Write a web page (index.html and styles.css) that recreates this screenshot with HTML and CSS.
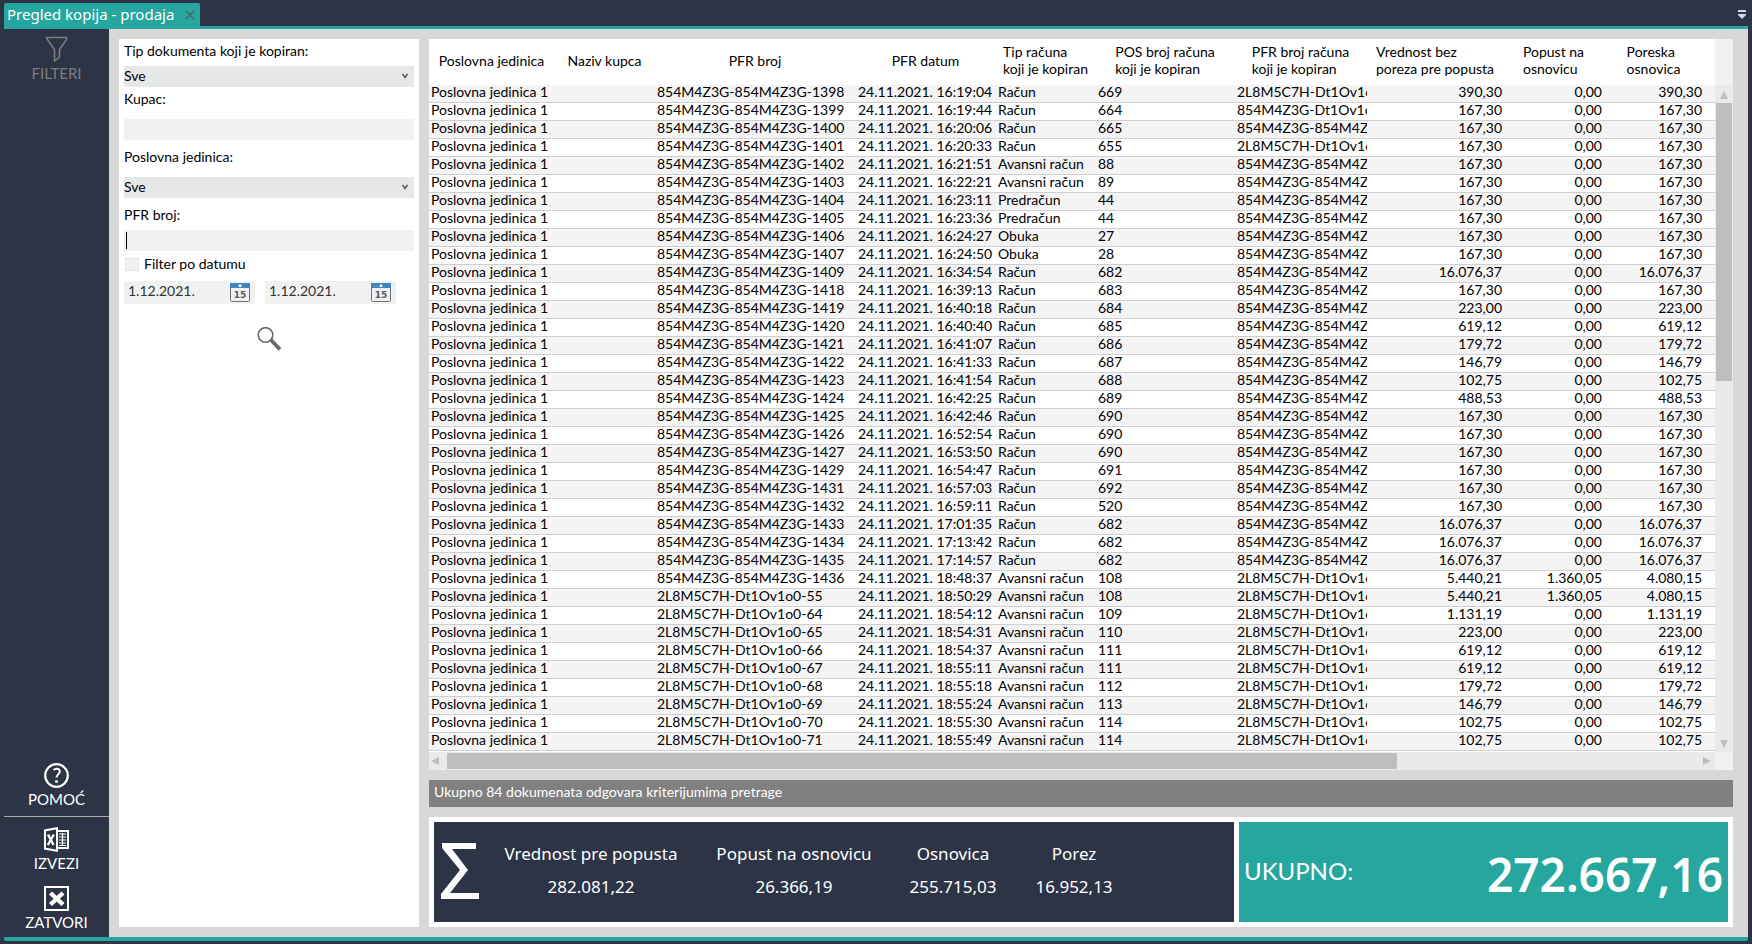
FILE: index.html
```html
<!DOCTYPE html>
<html lang="sr-Latn">
<head>
<meta charset="utf-8">
<title>Pregled kopija - prodaja</title>
<link rel="stylesheet" href="styles.css">
</head>
<body>
<header class="tabbar">
  <div class="tab">
    <span>Pregled kopija - prodaja</span>
    <button class="tab-close" aria-label="Zatvori karticu"><svg width="10" height="10" viewBox="0 0 10 10"><path d="M1 1l8 8M9 1l-8 8" stroke="#4d6464" stroke-width="1.5"/></svg></button>
  </div>
  <button class="tab-menu" aria-label="Lista kartica"><svg width="8" height="9" viewBox="0 0 8 9"><path d="M0 0h8v2H0zM0 4h8v1L4 9 0 5z" fill="#d3d8e6"/></svg></button>
</header>
<div class="workspace">
  <nav class="sidebar">
    <button class="side-btn side-btn-off">
      <svg width="25" height="26" viewBox="0 0 25 26"><path d="M2.500 1.500h20v2l-7 10v7.500l-5 4v-11.500l-7-10z" fill="none" stroke="#7d7d7b" stroke-width="1.600"/></svg>
      <span>FILTERI</span>
    </button>
    <div class="side-bottom">
      <button class="side-btn">
        <svg width="25" height="25" viewBox="0 0 25 25" fill="none" stroke="#fff"><circle cx="12.500" cy="12.500" r="11.300" stroke-width="2.200"/><path d="M9.500 7.200c1-1.100 2-1.400 3.200-1.400 1.900 0 3.100 1.100 3.100 2.800 0 2.700-3.300 2.900-3.300 5.900" stroke-width="2"/><path d="M11.200 17.200h2.600v2.600h-2.600z" fill="#fff" stroke="none"/></svg>
        <span>POMOĆ</span>
      </button>
      <hr class="side-line">
      <button class="side-btn">
        <svg width="25" height="25" viewBox="0 0 25 25"><path d="M0 2.500L14 0v25L0 22.500z" fill="#fff"/><path d="M14 4h10v17H14" fill="none" stroke="#fff" stroke-width="2"/><path d="M2 4.300l10-1.700v19.800L2 20.700z" fill="#2d3446"/><path d="M4 7.500l5.500 10.500M9.800 7.500L3.800 18" stroke="#fff" stroke-width="2.400"/><path d="M15 7h7M15 10h7M15 13h7M15 16h7M15 18.500h7M18.500 6v13" stroke="#fff" stroke-width="1.200"/></svg>
        <span>IZVEZI</span>
      </button>
      <button class="side-btn side-btn-last">
        <svg width="25" height="25" viewBox="0 0 25 25" fill="none" stroke="#fff"><path d="M1 1h23v23H1z" stroke-width="2"/><path d="M6.500 7l12.500 11.500M19 7L6.500 18.500" stroke-width="4.400"/></svg>
        <span>ZATVORI</span>
      </button>
    </div>
  </nav>
  <main class="content">
    <form class="filters">
      <label for="tip">Tip dokumenta koji je kopiran:</label>
      <div class="select-wrap"><select id="tip"><option>Sve</option></select><svg class="chevron" width="6" height="6" viewBox="0 0 6 6"><path d="M.5 1L3 4.500 5.500 1" fill="none" stroke="#555" stroke-width="1.500"/></svg></div>
      <label for="kupac">Kupac:</label>
      <input class="field field-low" id="kupac" type="text">
      <label class="label-low" for="pj">Poslovna jedinica:</label>
      <div class="select-wrap field-low"><select id="pj"><option>Sve</option></select><svg class="chevron" width="6" height="6" viewBox="0 0 6 6"><path d="M.5 1L3 4.500 5.500 1" fill="none" stroke="#555" stroke-width="1.500"/></svg></div>
      <label class="label-low" for="pfr">PFR broj:</label>
      <div class="caret-wrap"><input class="field" id="pfr" type="text"><span class="caret"></span></div>
      <div class="check-row"><input type="checkbox" id="pd"><label for="pd">Filter po datumu</label></div>
      <div class="dates">
        <div class="date"><input type="text" aria-label="Datum od" value="1.12.2021."><button type="button" aria-label="Kalendar od"><svg width="20" height="19" viewBox="0 0 20 19"><rect x=".5" y=".5" width="19" height="18" rx="1" fill="#f1f1f3" stroke="#6d7075"/><path d="M0 0h20v5H0z" fill="#4585bf"/><circle cx="10" cy="2.700" r="1.500" fill="#fff"/><text x="10" y="15" class="cal-num">15</text></svg></button></div>
        <div class="date"><input type="text" aria-label="Datum do" value="1.12.2021."><button type="button" aria-label="Kalendar do"><svg width="20" height="19" viewBox="0 0 20 19"><rect x=".5" y=".5" width="19" height="18" rx="1" fill="#f1f1f3" stroke="#6d7075"/><path d="M0 0h20v5H0z" fill="#4585bf"/><circle cx="10" cy="2.700" r="1.500" fill="#fff"/><text x="10" y="15" class="cal-num">15</text></svg></button></div>
      </div>
      <button class="search" type="button" aria-label="Pretraži"><svg width="25" height="24" viewBox="0 0 25 24" fill="none" stroke="#686868"><circle cx="8.500" cy="8" r="7.300" stroke-width="1.600"/><path d="M13.500 12.500l9.500 10" stroke-width="3.800"/></svg></button>
    </form>
    <div class="results">
      <div class="grid">
        <table>
          <colgroup><col class="c1"><col class="c2"><col class="c3"><col class="c4"><col class="c5"><col class="c6"><col class="c7"><col class="c8"><col class="c9"><col class="c10"><col></colgroup>
          <thead><tr><th><span>Poslovna jedinica</span><th><span>Naziv kupca</span><th><span>PFR broj</span><th><span>PFR datum</span><th><span>Tip računa<br>koji je kopiran</span><th><span>POS broj računa<br>koji je kopiran</span><th><span>PFR broj računa<br>koji je kopiran</span><th><span>Vrednost bez<br>poreza pre popusta</span><th><span>Popust na<br>osnovicu</span><th><span>Poreska<br>osnovica</span><th></tr></thead>
          <tbody>
          <tr><td>Poslovna jedinica 1<td><td>854M4Z3G-854M4Z3G-1398<td>24.11.2021. 16:19:04<td>Račun<td>669<td>2L8M5C7H-Dt1Ov1o0<td>390,30<td>0,00<td>390,30<td></tr>
          <tr><td>Poslovna jedinica 1<td><td>854M4Z3G-854M4Z3G-1399<td>24.11.2021. 16:19:44<td>Račun<td>664<td>854M4Z3G-Dt1Ov1o0<td>167,30<td>0,00<td>167,30<td></tr>
          <tr><td>Poslovna jedinica 1<td><td>854M4Z3G-854M4Z3G-1400<td>24.11.2021. 16:20:06<td>Račun<td>665<td>854M4Z3G-854M4Z3G<td>167,30<td>0,00<td>167,30<td></tr>
          <tr><td>Poslovna jedinica 1<td><td>854M4Z3G-854M4Z3G-1401<td>24.11.2021. 16:20:33<td>Račun<td>655<td>2L8M5C7H-Dt1Ov1o0<td>167,30<td>0,00<td>167,30<td></tr>
          <tr><td>Poslovna jedinica 1<td><td>854M4Z3G-854M4Z3G-1402<td>24.11.2021. 16:21:51<td>Avansni račun<td>88<td>854M4Z3G-854M4Z3G<td>167,30<td>0,00<td>167,30<td></tr>
          <tr><td>Poslovna jedinica 1<td><td>854M4Z3G-854M4Z3G-1403<td>24.11.2021. 16:22:21<td>Avansni račun<td>89<td>854M4Z3G-854M4Z3G<td>167,30<td>0,00<td>167,30<td></tr>
          <tr><td>Poslovna jedinica 1<td><td>854M4Z3G-854M4Z3G-1404<td>24.11.2021. 16:23:11<td>Predračun<td>44<td>854M4Z3G-854M4Z3G<td>167,30<td>0,00<td>167,30<td></tr>
          <tr><td>Poslovna jedinica 1<td><td>854M4Z3G-854M4Z3G-1405<td>24.11.2021. 16:23:36<td>Predračun<td>44<td>854M4Z3G-854M4Z3G<td>167,30<td>0,00<td>167,30<td></tr>
          <tr><td>Poslovna jedinica 1<td><td>854M4Z3G-854M4Z3G-1406<td>24.11.2021. 16:24:27<td>Obuka<td>27<td>854M4Z3G-854M4Z3G<td>167,30<td>0,00<td>167,30<td></tr>
          <tr><td>Poslovna jedinica 1<td><td>854M4Z3G-854M4Z3G-1407<td>24.11.2021. 16:24:50<td>Obuka<td>28<td>854M4Z3G-854M4Z3G<td>167,30<td>0,00<td>167,30<td></tr>
          <tr><td>Poslovna jedinica 1<td><td>854M4Z3G-854M4Z3G-1409<td>24.11.2021. 16:34:54<td>Račun<td>682<td>854M4Z3G-854M4Z3G<td>16.076,37<td>0,00<td>16.076,37<td></tr>
          <tr><td>Poslovna jedinica 1<td><td>854M4Z3G-854M4Z3G-1418<td>24.11.2021. 16:39:13<td>Račun<td>683<td>854M4Z3G-854M4Z3G<td>167,30<td>0,00<td>167,30<td></tr>
          <tr><td>Poslovna jedinica 1<td><td>854M4Z3G-854M4Z3G-1419<td>24.11.2021. 16:40:18<td>Račun<td>684<td>854M4Z3G-854M4Z3G<td>223,00<td>0,00<td>223,00<td></tr>
          <tr><td>Poslovna jedinica 1<td><td>854M4Z3G-854M4Z3G-1420<td>24.11.2021. 16:40:40<td>Račun<td>685<td>854M4Z3G-854M4Z3G<td>619,12<td>0,00<td>619,12<td></tr>
          <tr><td>Poslovna jedinica 1<td><td>854M4Z3G-854M4Z3G-1421<td>24.11.2021. 16:41:07<td>Račun<td>686<td>854M4Z3G-854M4Z3G<td>179,72<td>0,00<td>179,72<td></tr>
          <tr><td>Poslovna jedinica 1<td><td>854M4Z3G-854M4Z3G-1422<td>24.11.2021. 16:41:33<td>Račun<td>687<td>854M4Z3G-854M4Z3G<td>146,79<td>0,00<td>146,79<td></tr>
          <tr><td>Poslovna jedinica 1<td><td>854M4Z3G-854M4Z3G-1423<td>24.11.2021. 16:41:54<td>Račun<td>688<td>854M4Z3G-854M4Z3G<td>102,75<td>0,00<td>102,75<td></tr>
          <tr><td>Poslovna jedinica 1<td><td>854M4Z3G-854M4Z3G-1424<td>24.11.2021. 16:42:25<td>Račun<td>689<td>854M4Z3G-854M4Z3G<td>488,53<td>0,00<td>488,53<td></tr>
          <tr><td>Poslovna jedinica 1<td><td>854M4Z3G-854M4Z3G-1425<td>24.11.2021. 16:42:46<td>Račun<td>690<td>854M4Z3G-854M4Z3G<td>167,30<td>0,00<td>167,30<td></tr>
          <tr><td>Poslovna jedinica 1<td><td>854M4Z3G-854M4Z3G-1426<td>24.11.2021. 16:52:54<td>Račun<td>690<td>854M4Z3G-854M4Z3G<td>167,30<td>0,00<td>167,30<td></tr>
          <tr><td>Poslovna jedinica 1<td><td>854M4Z3G-854M4Z3G-1427<td>24.11.2021. 16:53:50<td>Račun<td>690<td>854M4Z3G-854M4Z3G<td>167,30<td>0,00<td>167,30<td></tr>
          <tr><td>Poslovna jedinica 1<td><td>854M4Z3G-854M4Z3G-1429<td>24.11.2021. 16:54:47<td>Račun<td>691<td>854M4Z3G-854M4Z3G<td>167,30<td>0,00<td>167,30<td></tr>
          <tr><td>Poslovna jedinica 1<td><td>854M4Z3G-854M4Z3G-1431<td>24.11.2021. 16:57:03<td>Račun<td>692<td>854M4Z3G-854M4Z3G<td>167,30<td>0,00<td>167,30<td></tr>
          <tr><td>Poslovna jedinica 1<td><td>854M4Z3G-854M4Z3G-1432<td>24.11.2021. 16:59:11<td>Račun<td>520<td>854M4Z3G-854M4Z3G<td>167,30<td>0,00<td>167,30<td></tr>
          <tr><td>Poslovna jedinica 1<td><td>854M4Z3G-854M4Z3G-1433<td>24.11.2021. 17:01:35<td>Račun<td>682<td>854M4Z3G-854M4Z3G<td>16.076,37<td>0,00<td>16.076,37<td></tr>
          <tr><td>Poslovna jedinica 1<td><td>854M4Z3G-854M4Z3G-1434<td>24.11.2021. 17:13:42<td>Račun<td>682<td>854M4Z3G-854M4Z3G<td>16.076,37<td>0,00<td>16.076,37<td></tr>
          <tr><td>Poslovna jedinica 1<td><td>854M4Z3G-854M4Z3G-1435<td>24.11.2021. 17:14:57<td>Račun<td>682<td>854M4Z3G-854M4Z3G<td>16.076,37<td>0,00<td>16.076,37<td></tr>
          <tr><td>Poslovna jedinica 1<td><td>854M4Z3G-854M4Z3G-1436<td>24.11.2021. 18:48:37<td>Avansni račun<td>108<td>2L8M5C7H-Dt1Ov1o0<td>5.440,21<td>1.360,05<td>4.080,15<td></tr>
          <tr><td>Poslovna jedinica 1<td><td>2L8M5C7H-Dt1Ov1o0-55<td>24.11.2021. 18:50:29<td>Avansni račun<td>108<td>2L8M5C7H-Dt1Ov1o0<td>5.440,21<td>1.360,05<td>4.080,15<td></tr>
          <tr><td>Poslovna jedinica 1<td><td>2L8M5C7H-Dt1Ov1o0-64<td>24.11.2021. 18:54:12<td>Avansni račun<td>109<td>2L8M5C7H-Dt1Ov1o0<td>1.131,19<td>0,00<td>1.131,19<td></tr>
          <tr><td>Poslovna jedinica 1<td><td>2L8M5C7H-Dt1Ov1o0-65<td>24.11.2021. 18:54:31<td>Avansni račun<td>110<td>2L8M5C7H-Dt1Ov1o0<td>223,00<td>0,00<td>223,00<td></tr>
          <tr><td>Poslovna jedinica 1<td><td>2L8M5C7H-Dt1Ov1o0-66<td>24.11.2021. 18:54:37<td>Avansni račun<td>111<td>2L8M5C7H-Dt1Ov1o0<td>619,12<td>0,00<td>619,12<td></tr>
          <tr><td>Poslovna jedinica 1<td><td>2L8M5C7H-Dt1Ov1o0-67<td>24.11.2021. 18:55:11<td>Avansni račun<td>111<td>2L8M5C7H-Dt1Ov1o0<td>619,12<td>0,00<td>619,12<td></tr>
          <tr><td>Poslovna jedinica 1<td><td>2L8M5C7H-Dt1Ov1o0-68<td>24.11.2021. 18:55:18<td>Avansni račun<td>112<td>2L8M5C7H-Dt1Ov1o0<td>179,72<td>0,00<td>179,72<td></tr>
          <tr><td>Poslovna jedinica 1<td><td>2L8M5C7H-Dt1Ov1o0-69<td>24.11.2021. 18:55:24<td>Avansni račun<td>113<td>2L8M5C7H-Dt1Ov1o0<td>146,79<td>0,00<td>146,79<td></tr>
          <tr><td>Poslovna jedinica 1<td><td>2L8M5C7H-Dt1Ov1o0-70<td>24.11.2021. 18:55:30<td>Avansni račun<td>114<td>2L8M5C7H-Dt1Ov1o0<td>102,75<td>0,00<td>102,75<td></tr>
          <tr><td>Poslovna jedinica 1<td><td>2L8M5C7H-Dt1Ov1o0-71<td>24.11.2021. 18:55:49<td>Avansni račun<td>114<td>2L8M5C7H-Dt1Ov1o0<td>102,75<td>0,00<td>102,75<td></tr>
          </tbody>
        </table>
        <div class="vbar">
          <div class="vbar-head"></div>
          <svg class="arrow" width="18" height="18" viewBox="0 0 18 18"><path d="M5 14l4-8 4 8z" fill="#bebebe"/></svg>
          <div class="vtrack"><div class="vthumb"></div></div>
          <svg class="arrow" width="18" height="18" viewBox="0 0 18 18"><path d="M5 6l4 8 4-8z" fill="#bebebe"/></svg>
        </div>
        <div class="hbar">
          <svg class="arrow" width="18" height="18" viewBox="0 0 18 18"><path d="M10 5L2 9l8 4z" fill="#bebebe"/></svg>
          <div class="htrack"><div class="hthumb"></div></div>
          <svg class="arrow" width="18" height="18" viewBox="0 0 18 18"><path d="M6 5l8 4-8 4z" fill="#bebebe"/></svg>
        </div>
        <div class="corner"></div>
      </div>
      <div class="status">Ukupno 84 dokumenata odgovara kriterijumima pretrage</div>
      <section class="totals">
        <div class="sums">
          <svg class="sigma" width="38" height="56" viewBox="0 0 38 56"><path d="M1 0h34v6H11l16 21L9 50h29v6H0v-5l19-24L1 5z" fill="#fff"/></svg>
          <dl class="sum sum-a"><dt>Vrednost pre popusta</dt><dd>282.081,22</dd></dl>
          <dl class="sum sum-b"><dt>Popust na osnovicu</dt><dd>26.366,19</dd></dl>
          <dl class="sum sum-c"><dt>Osnovica</dt><dd>255.715,03</dd></dl>
          <dl class="sum sum-d"><dt>Porez</dt><dd>16.952,13</dd></dl>
        </div>
        <div class="grand"><span class="grand-label">UKUPNO:</span><strong>272.667,16</strong></div>
      </section>
    </div>
  </main>
</div>
</body>
</html>
```
FILE: styles.css
```css
* { box-sizing: border-box; }
body {
  margin: 0;
  min-height: 100vh;
  display: flex;
  flex-direction: column;
  padding: 3px 4px;
  background: #2d3446;
  color: #000;
  font: 14px/17px Lato, sans-serif;
}
button { border: 0; padding: 0; background: none; font: inherit; color: inherit; display: block; }
svg { display: block; }

.tabbar { display: flex; justify-content: space-between; border-bottom: 3px solid #25a7a0; border-radius: 0 2px 0 0; }
.tab {
  display: flex;
  align-items: center;
  gap: 11px;
  height: 23px;
  padding: 0 5px 0 3px;
  border-radius: 2px 2px 0 0;
  background: #25a7a0;
  color: #fff;
  font: 15px/23px "Noto Sans", sans-serif;
}
.tab-menu { padding: 0 2px; }

.workspace { flex: 1; display: flex; border-bottom: 4px solid #25a7a0; border-radius: 0 0 2px 2px; }
.sidebar { width: 105px; display: flex; flex-direction: column; justify-content: space-between; padding: 7px 0 5px; color: #fff; }
.side-btn { width: 100%; display: flex; flex-direction: column; align-items: center; gap: 2px; padding-bottom: 1px; font-size: 15px; line-height: 18px; }
.side-btn-off { color: #7d7d7b; }
.side-btn-last { margin-top: 13px; }
.side-line { height: 1px; margin: 7px 0 10px; border: 0; background: #a9a9a9; }

.content { flex: 1; min-width: 0; display: flex; gap: 10px; padding: 10px 15px 10px 10px; background: #d8d8d8; }
.filters { width: 300px; padding: 3px 5px; background: #fff; display: flex; flex-direction: column; }
.filters label { line-height: 17px; }
.select-wrap { position: relative; height: 21px; margin: 7px 0 3px; }
.filters select { appearance: none; display: block; width: 100%; height: 21px; border: 0; padding: 0 0 2px; background: #e6e8e7; font: inherit; color: #000; }
.chevron { position: absolute; right: 6px; top: 7px; pointer-events: none; }
.field { display: block; width: 100%; height: 21px; border: 0; background: #f0f2f1; font: inherit; }
.filters .field-low { margin-top: 12px; }
.filters .label-low { margin-top: 8px; }
.filters .select-wrap + .label-low { margin-top: 5px; }
.caret-wrap { position: relative; margin-top: 7px; }
.caret { position: absolute; left: 2px; top: 2px; width: 1px; height: 17px; background: #000; }
.check-row { display: flex; align-items: center; gap: 5px; height: 17px; margin: 4px 0 9px 1px; }
.check-row input { appearance: none; width: 14px; height: 13px; margin: 2px 0 0; border: 1px solid #e3e5e4; background: #f0f2f1; }
.dates { display: flex; gap: 10px; }
.date { display: flex; width: 131px; height: 23px; padding: 1px 5px 2px 4px; background: #f0f2f1; }
.date input { flex: 1; min-width: 0; height: 17px; border: 0; padding: 0; background: none; font: inherit; color: #333; }
.cal-num { font: bold 9px "DejaVu Sans", sans-serif; fill: #5a5a5a; text-anchor: middle; }
.search { align-self: center; margin: 23px 0 0; }

.results { flex: 1; min-width: 0; display: flex; flex-direction: column; gap: 10px; }
.grid { flex: 1; display: grid; grid-template-columns: 1fr 18px; grid-template-rows: 1fr 18px; background: #fff; align-items: start; }
table { width: 100%; table-layout: fixed; border-collapse: separate; border-spacing: 0; margin-bottom: 1px; }
.c1 { width: 126px; }
.c2, .c5, .c9, .c10 { width: 100px; }
.c3 { width: 201px; }
.c4 { width: 140px; }
.c6 { width: 139px; }
.c7 { width: 132px; }
.c8 { width: 137px; }
th { height: 46px; padding: 0 1px 4px 0; font-weight: 400; vertical-align: middle; white-space: nowrap; }
th span { display: inline-block; text-align: left; }
td { height: 18px; padding: 0 0 4px 2px; border-bottom: 1px solid #d0d0d0; line-height: 13px; white-space: nowrap; }
td:nth-child(7) { overflow: hidden; }
td:nth-child(n+8) { text-align: right; padding-right: 2px; }
tbody tr:nth-child(odd) { background: #f4f4f4; }

.vbar { align-self: stretch; display: flex; flex-direction: column; background: #eaeaea; }
.vbar-head { height: 46px; background: #f0f2f1; }
.vtrack { flex: 1; padding: 0 1px; }
.vthumb { height: 44%; background: #bebebe; }
.hbar { display: flex; background: #eaeaea; }
.htrack { flex: 1; padding: 1px 0; }
.hthumb { width: 76%; height: 16px; background: #bebebe; }
.corner { height: 18px; background: #f0f2f1; }

.status { height: 27px; padding: 3px 5px; background: #808080; color: #fff; }
.totals { display: grid; grid-template-columns: 800fr 489fr; gap: 5px; height: 110px; padding: 5px; background: #fff; color: #fff; }
.sums { display: flex; align-items: center; padding: 0 7px 2px; background: #2d3446; font: 17px/24px "Noto Sans", sans-serif; }
.sum { margin: 0; padding-bottom: 2px; text-align: center; display: flex; flex-direction: column; gap: 9px; white-space: nowrap; }
.sum dd { margin: 0; }
.sum-a { width: 224px; }
.sum-b { width: 182px; }
.sum-c { width: 136px; }
.sum-d { width: 106px; }
.grand { display: flex; align-items: center; justify-content: space-between; padding: 4px 5px 0; background: #25a7a0; }
.grand-label { padding-bottom: 6px; font-size: 24px; line-height: 30px; }
.grand strong { font: 600 46px/60px "Noto Sans", sans-serif; }
```
